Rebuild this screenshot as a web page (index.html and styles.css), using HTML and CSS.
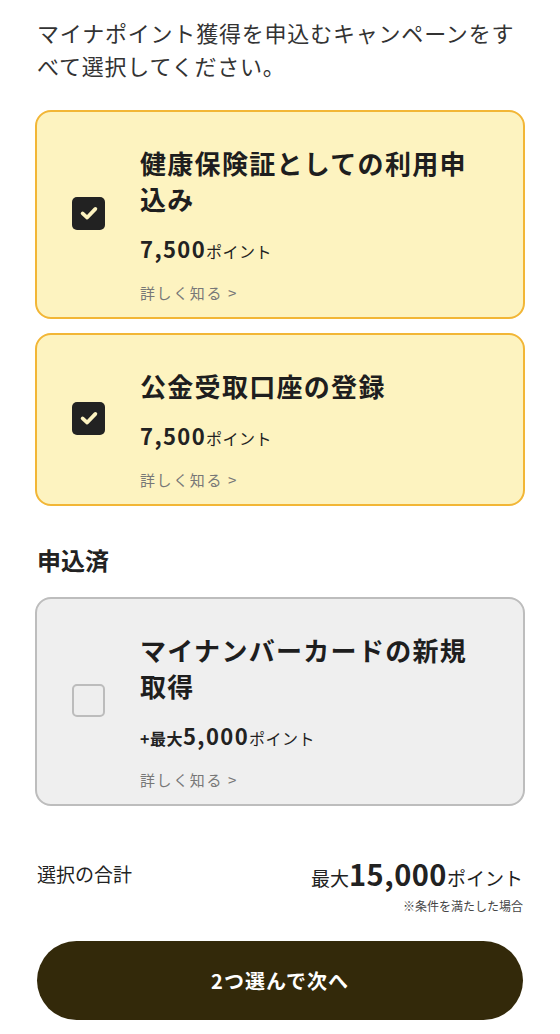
FILE: index.html
```html
<!DOCTYPE html>
<html lang="ja">

<head>
    <meta charset="UTF-8">
    <meta name="viewport" content="width=device-width, initial-scale=1.0">
    <title>マイナポイント申込</title>

    <link rel="stylesheet" href="styles.css">

</head>

<body>
    <div class="page">
        <p class="intro">マイナポイント獲得を申込むキャンペーンをすべて選択してください。</p>

        <div class="campaign checked">
            <div class="checkbox">
                <svg viewBox="0 0 24 24" width="22" height="22">
                    <polyline points="5,12.5 10,17 19,7.5" fill="none" stroke="#fdf3c0" stroke-width="4" stroke-linecap="round" stroke-linejoin="round" />
                </svg>
            </div>
            <div class="campaign-body">
                <div class="campaign-title">健康保険証としての利用申込み</div>
                <div class="points"><span class="num">7,500</span>ポイント</div>
                <div class="more">詳しく知る &gt;</div>
            </div>
        </div>

        <div class="campaign checked">
            <div class="checkbox">
                <svg viewBox="0 0 24 24" width="22" height="22">
                    <polyline points="5,12.5 10,17 19,7.5" fill="none" stroke="#fdf3c0" stroke-width="4" stroke-linecap="round" stroke-linejoin="round" />
                </svg>
            </div>
            <div class="campaign-body">
                <div class="campaign-title">公金受取口座の登録</div>
                <div class="points"><span class="num">7,500</span>ポイント</div>
                <div class="more">詳しく知る &gt;</div>
            </div>
        </div>

        <h2 class="section-title">申込済</h2>

        <div class="campaign done">
            <div class="checkbox"></div>
            <div class="campaign-body">
                <div class="campaign-title">マイナンバーカードの新規取得</div>
                <div class="points"><span class="plus">+最大</span><span class="num">5,000</span>ポイント</div>
                <div class="more">詳しく知る &gt;</div>
            </div>
        </div>

        <div class="total">
            <div class="total-label">選択の合計</div>
            <div class="total-value">最大<span class="num">15,000</span>ポイント</div>
        </div>
        <div class="note">※条件を満たした場合</div>

        <button class="next-btn">2つ選んで次へ</button>
    </div>
</body>

</html>
```

FILE: styles.css
```css
* {
    margin: 0;
    padding: 0;
    box-sizing: border-box;
}

body {
    background: #fff;
    font-family: "Noto Sans CJK JP", "Noto Sans", sans-serif;
    color: #222;
}

.page {
    padding: 16px 35px 0;
}

.intro {
    font-size: 22px;
    line-height: 33px;
    letter-spacing: 0.8px;
    color: #333;
    padding: 0 4px 0 2px;
}

.campaign {
    display: flex;
    align-items: center;
    margin-top: 14px;
    padding: 33px 43px 14px 35px;
    border: 2.5px solid #f2b636;
    border-radius: 16px;
    background-color: #fdf3c0;
}

.intro + .campaign {
    margin-top: 28px;
}

.campaign.done {
    border-color: #bdbdbd;
    background-color: #efefef;
    margin-top: 21px;
}

.checkbox {
    flex: none;
    width: 33px;
    height: 33px;
    margin-top: -22px;
    border-radius: 5px;
    background: #222;
    display: flex;
    align-items: center;
    justify-content: center;
}

.done .checkbox {
    background: #eee;
    border: 2.5px solid #bcbcbc;
}

.campaign-body {
    margin-left: 35px;
    flex: 1;
}

.campaign-title {
    font-size: 26px;
    font-weight: 700;
    line-height: 36px;
    letter-spacing: 1.3px;
    color: #1e1e1e;
}

.points {
    margin-top: 19px;
    font-size: 16px;
    line-height: 24px;
    letter-spacing: 0.5px;
    color: #222;
}

.points .num {
    font-size: 22px;
    font-weight: 700;
    letter-spacing: 1.4px;
}

.points .plus {
    font-size: 16px;
    font-weight: 700;
}

.more {
    margin-top: 20px;
    font-size: 15px;
    line-height: 20px;
    letter-spacing: 1.6px;
    color: #777;
}

.section-title {
    margin-top: 38px;
    font-size: 24px;
    line-height: 32px;
    font-weight: 700;
    color: #222;
    padding-left: 2px;
}

.total {
    margin-top: 49px;
    display: flex;
    justify-content: space-between;
    align-items: center;
    padding: 0 2px;
    height: 36px;
}

.total-label {
    font-size: 19px;
    color: #222;
}

.total-value {
    font-size: 19px;
    color: #222;
}

.total-value .num {
    font-size: 29px;
    font-weight: 700;
    letter-spacing: 0.5px;
}

.note {
    text-align: right;
    font-size: 12px;
    line-height: 16px;
    color: #444;
    padding-right: 2px;
    margin-top: 7px;
}

.next-btn {
    display: block;
    width: calc(100% - 4px);
    margin: 27px 2px 0;
    height: 79px;
    border: none;
    border-radius: 40px;
    background-color: #33290a;
    color: #fff;
    font-family: inherit;
    font-size: 20px;
    font-weight: 700;
    letter-spacing: 1px;
}
```
